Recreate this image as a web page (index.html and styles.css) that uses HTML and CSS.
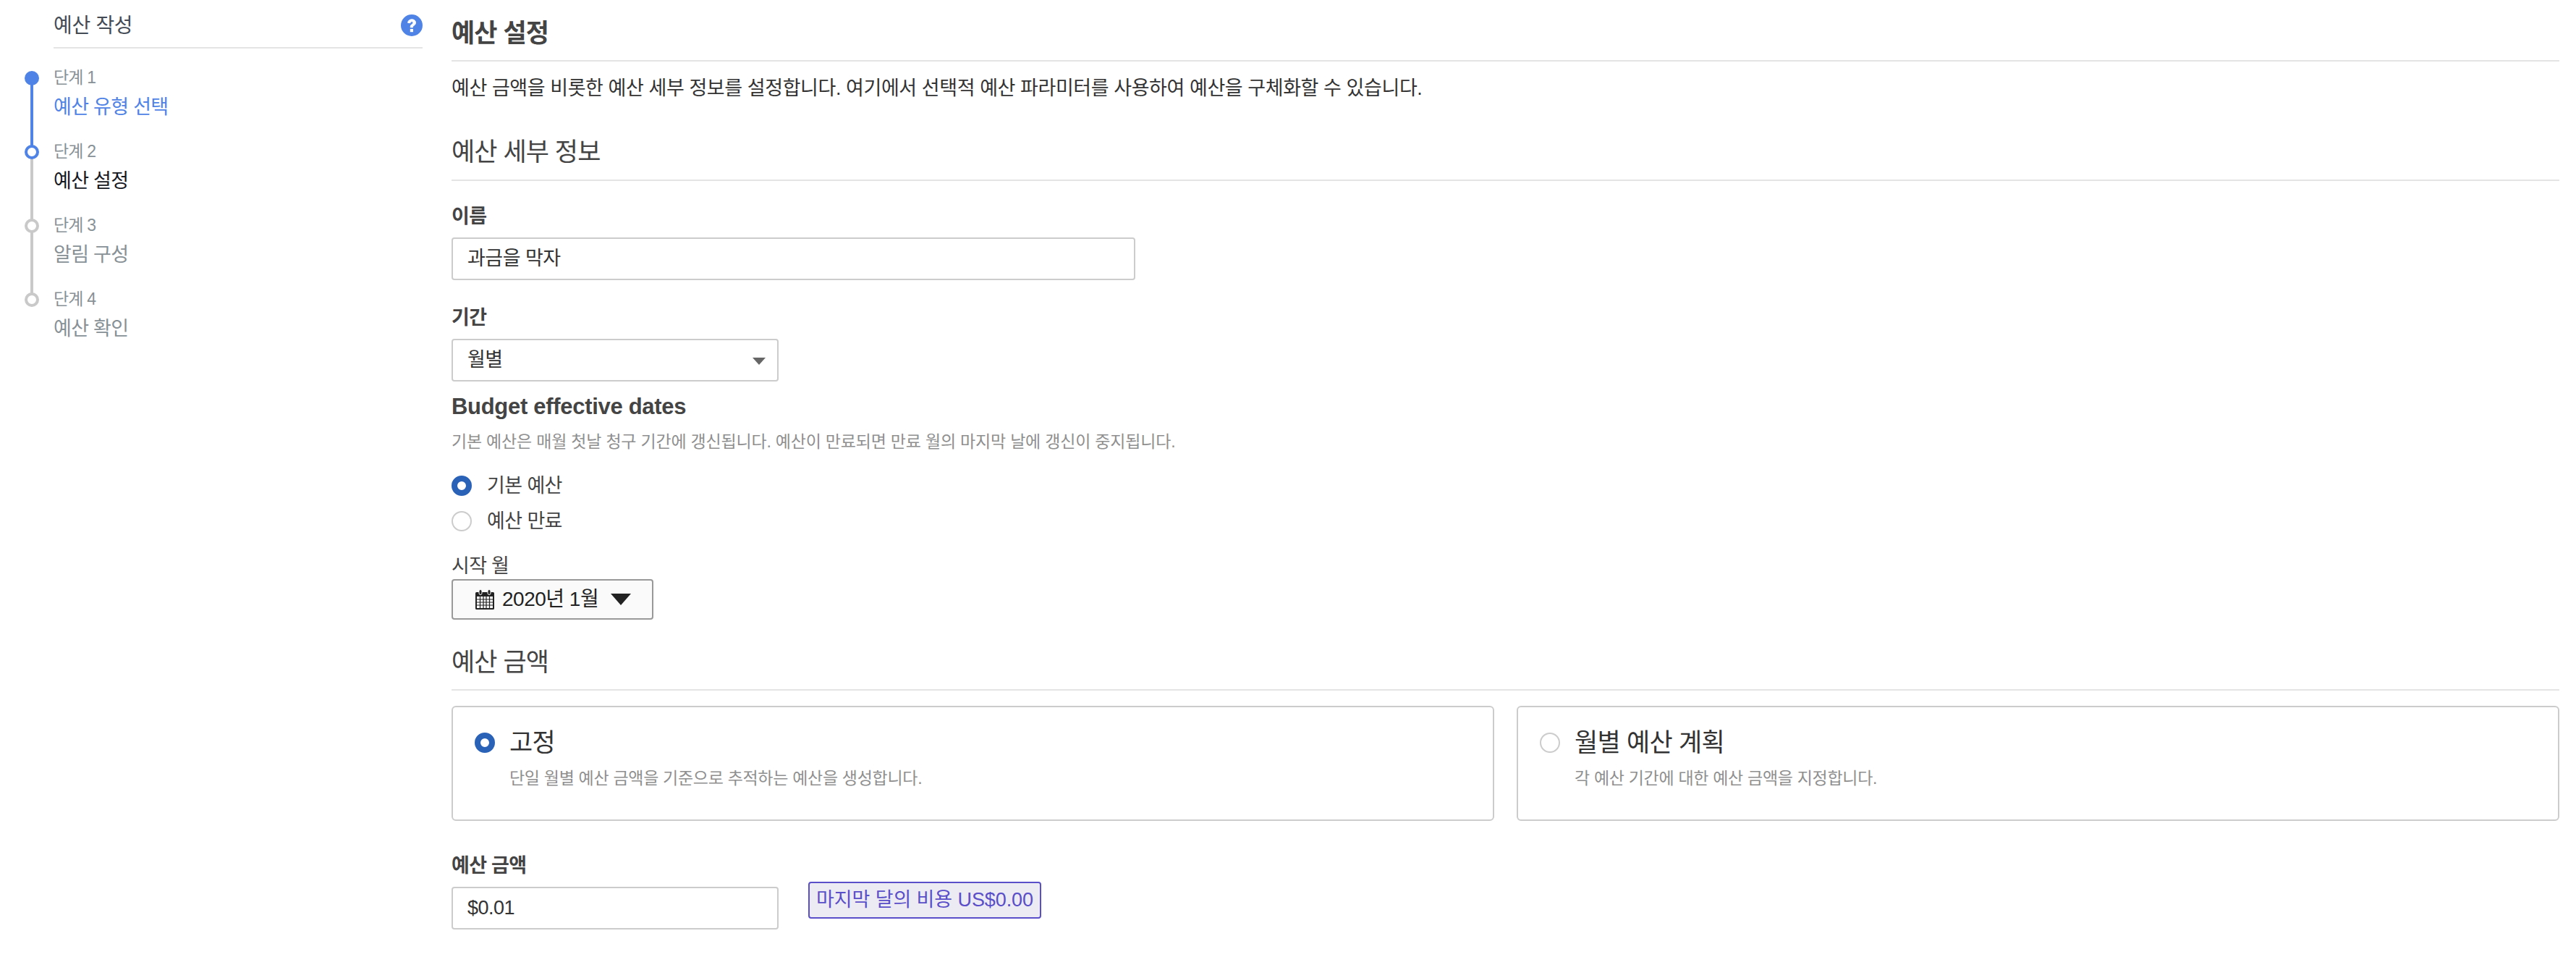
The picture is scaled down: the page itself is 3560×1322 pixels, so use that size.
FILE: index.html
```html
<!DOCTYPE html>
<html lang="ko">
<head>
<meta charset="utf-8">
<title>예산 설정</title>
<link rel="stylesheet" href="styles.css">
</head>
<body>
<div class="page">
  <aside class="side">
    <div class="side-head">
      <span class="side-title">예산 작성</span>
      <svg class="help" viewBox="0 0 30 30" width="30" height="30"><circle cx="15" cy="15" r="15" fill="#4f83e6"/><path d="M9.6 11.4c.3-3 2.600-4.600 5.500-4.600 3.100 0 5.400 1.800 5.400 4.500 0 2-1.100 3.100-2.500 4-1.200.8-1.500 1.200-1.500 2.500h-3.300c0-2.500.8-3.500 2.200-4.400 1-.7 1.500-1.100 1.500-2 0-1-.7-1.600-1.800-1.600-1.200 0-1.900.7-2.100 1.900z" fill="#fff" stroke="#fff" stroke-width="1"/><rect x="12.800" y="20" width="4.200" height="4.200" fill="#fff"/></svg>
    </div>
    <ol class="steps">
      <li class="step done"><span class="step-no">단계 1</span><a class="step-name">예산 유형 선택</a></li>
      <li class="step current"><span class="step-no">단계 2</span><span class="step-name">예산 설정</span></li>
      <li class="step"><span class="step-no">단계 3</span><span class="step-name">알림 구성</span></li>
      <li class="step last"><span class="step-no">단계 4</span><span class="step-name">예산 확인</span></li>
    </ol>
  </aside>
  <main class="main">
    <h1 class="h1">예산 설정</h1>
    <p class="intro">예산 금액을 비롯한 예산 세부 정보를 설정합니다. 여기에서 선택적 예산 파라미터를 사용하여 예산을 구체화할 수 있습니다.</p>
    <h2 class="h2">예산 세부 정보</h2>
    <div class="label first">이름</div>
    <div class="field wide">과금을 막자</div>
    <div class="label period">기간</div>
    <div class="field narrow select">월별<span class="sel-arrow"></span></div>
    <h3 class="h3">Budget effective dates</h3>
    <p class="help-text">기본 예산은 매월 첫날 청구 기간에 갱신됩니다. 예산이 만료되면 만료 월의 마지막 날에 갱신이 중지됩니다.</p>
    <div class="radio-row r1"><span class="radio on"></span>기본 예산</div>
    <div class="radio-row r2"><span class="radio"></span>예산 만료</div>
    <div class="start-label">시작 월</div>
    <button class="date-btn" type="button">
      <svg class="cal" viewBox="0 0 26 28" width="26" height="28"><path d="M1.500 4h23a1.500 1.500 0 0 1 1.500 1.500v21a1.500 1.500 0 0 1-1.500 1.500h-23A1.500 1.500 0 0 1 0 26.500v-21A1.500 1.500 0 0 1 1.500 4z" fill="#222"/><rect x="2" y="10" width="22" height="16" fill="#fafafa"/><path d="M2 14h22M2 18h22M2 22h22M6.500 10v16M11 10v16M15 10v16M19.500 10v16" stroke="#222" stroke-width="1.200"/><rect x="5" y="0.500" width="4" height="7" rx="2" fill="#222" stroke="#fafafa"/><rect x="17" y="0.500" width="4" height="7" rx="2" fill="#222" stroke="#fafafa"/></svg>
      <span class="date-text">2020년 1월</span>
      <span class="date-caret"></span>
    </button>
    <h2 class="h2 amount-h">예산 금액</h2>
    <div class="cards">
      <div class="card">
        <div class="card-top"><span class="radio on"></span><span class="card-title">고정</span></div>
        <p class="card-desc">단일 월별 예산 금액을 기준으로 추적하는 예산을 생성합니다.</p>
      </div>
      <div class="card">
        <div class="card-top"><span class="radio"></span><span class="card-title">월별 예산 계획</span></div>
        <p class="card-desc">각 예산 기간에 대한 예산 금액을 지정합니다.</p>
      </div>
    </div>
    <div class="label amount-l">예산 금액</div>
    <div class="amount-row">
      <div class="field narrow">$0.01</div>
      <div class="badge">마지막 달의 비용 US$0.00</div>
    </div>
  </main>
</div>
</body>
</html>
```
FILE: styles.css
```css
*, *::before, *::after { box-sizing: border-box; }
html, body { margin: 0; padding: 0; background: #fff; overflow: hidden; }
body { font-family: "Liberation Sans", "Noto Sans CJK KR", sans-serif; color: #333; font-size: 28px; }
p, h1, h2, h3, ol { margin: 0; padding: 0; font-weight: normal; }
.page { display: flex; width: 3560px; height: 1322px; overflow: hidden; }

.side { width: 584px; flex: none; padding-left: 34px; }
.side-head { margin-left: 40px; height: 67px; border-bottom: 2px solid #e4e4e4; display: flex; justify-content: space-between; align-items: flex-start; padding-top: 16px; }
.side-title { font-size: 28px; line-height: 40px; color: #444b55; letter-spacing: -0.3px; }
.help { margin-top: 4px; }
.steps { list-style: none; margin-top: 31px; }
.step { position: relative; display: flex; flex-direction: column; height: 102px; padding-left: 40px; }
.step::before { content: ""; position: absolute; left: 0; top: 0; width: 20px; height: 20px; border-radius: 50%; border: 4px solid #c9c9c9; background: #fff; z-index: 1; }
.step::after { content: ""; position: absolute; left: 8px; top: 10px; width: 4px; height: 102px; background: #c9c9c9; }
.step.last::after { display: none; }
.step.done::before { background: #4f83e6; border-color: #4f83e6; }
.step.done::after { background: #4f83e6; }
.step.current::before { border-color: #4f83e6; }
.step-no { display: block; font-size: 23px; line-height: 30px; color: #879196; letter-spacing: -0.8px; margin-top: -6px; }
.step-name { display: block; font-size: 27px; line-height: 40px; color: #879196; letter-spacing: -0.7px; margin-top: 6px; }
.done .step-name { color: #4f83e6; }
.current .step-name { color: #16191f; }

.main { flex: none; width: 2913px; margin-left: 40px; padding-top: 26px; }
.h1 { font-size: 35px; line-height: 40px; font-weight: 700; color: #444; letter-spacing: -0.9px; padding-bottom: 17px; border-bottom: 2px solid #e4e4e4; }
.intro { font-size: 27px; line-height: 40px; margin-top: 17px; color: #333; letter-spacing: -0.42px; }
.h2 { font-size: 35px; line-height: 40px; color: #444; letter-spacing: -0.9px; margin-top: 48px; padding-bottom: 18px; border-bottom: 2px solid #e4e4e4; }
.label { font-size: 27px; line-height: 36px; font-weight: 700; color: #444; letter-spacing: -0.7px; }
.label.first { margin-top: 31px; }
.label.period { margin-top: 34px; }
.label.amount-l { margin-top: 44px; }
.field { height: 59px; border: 2px solid #ccc; border-radius: 4px; background: #fff; padding-left: 20px; font-size: 27px; line-height: 55px; color: #333; letter-spacing: -0.5px; margin-top: 11px; }
.wide { width: 945px; }
.narrow { width: 452px; }
.select { position: relative; }
.sel-arrow { position: absolute; right: 16px; top: 24px; width: 0; height: 0; border-left: 9px solid transparent; border-right: 9px solid transparent; border-top: 10px solid #666; }
.h3 { font-size: 31px; line-height: 36px; font-weight: 700; color: #444; margin-top: 17px; letter-spacing: -0.3px; }
.help-text { font-size: 23px; line-height: 30px; color: #8f8f8f; margin-top: 15px; letter-spacing: -0.2px; }
.radio-row { display: flex; align-items: center; gap: 21px; font-size: 27px; line-height: 36px; color: #444; letter-spacing: -0.6px; }
.r1 { margin-top: 28px; }
.r2 { margin-top: 13px; }
.radio { display: block; flex: none; width: 28px; height: 28px; border-radius: 50%; border: 2px solid #ccc; background: #fff; }
.radio.on { border: 8px solid #2a62b8; }
.start-label { font-size: 27px; line-height: 36px; color: #444; letter-spacing: -0.7px; margin-top: 26px; }
.date-btn { display: flex; align-items: center; width: 279px; height: 56px; margin-top: 0; padding: 0 0 0 31px; border: 2px solid #999; border-radius: 4px; background: #fafafa; font: inherit; color: #222; }
.date-text { margin-left: 11px; font-size: 28px; line-height: 36px; letter-spacing: -0.5px; }
.date-caret { margin-left: 17px; width: 0; height: 0; border-left: 14px solid transparent; border-right: 14px solid transparent; border-top: 16px solid #222; }
.amount-h { margin-top: 39px; padding-bottom: 17px; }
.cards { display: flex; gap: 31px; margin-top: 21px; }
.card { flex: 1; height: 159px; border: 2px solid #ccc; border-radius: 6px; padding: 29px 0 0 30px; }
.card-top { display: flex; align-items: center; gap: 20px; height: 40px; }
.card-title { font-size: 35px; line-height: 40px; color: #333; letter-spacing: -0.7px; }
.card-desc { font-size: 23px; line-height: 30px; color: #8f8f8f; margin: 14px 0 0 48px; letter-spacing: -0.3px; }
.amount-row { display: flex; align-items: flex-start; gap: 41px; }
.badge { margin-top: 4px; width: 322px; height: 51px; border: 2px solid #5a4fc8; border-radius: 4px; background: #ecebf3; color: #5a4fc8; font-size: 27px; line-height: 47px; text-align: center; white-space: nowrap; letter-spacing: -0.1px; }
```
